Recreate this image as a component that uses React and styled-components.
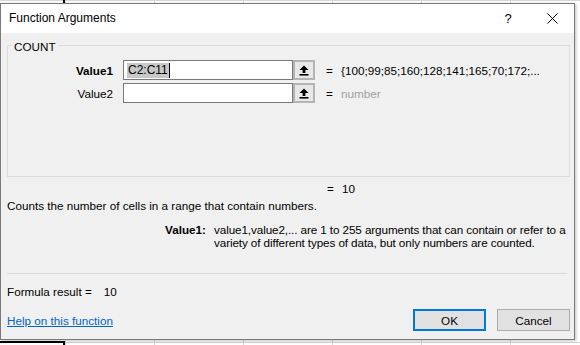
import React from 'react';
import styled, { createGlobalStyle } from 'styled-components';

const Global = createGlobalStyle`
  html, body { margin:0; padding:0; }
  body {
    width:580px;
    height:345px;
    overflow:hidden;
    background:#fff;
    font-family:"Segoe UI","Liberation Sans",Arial,sans-serif;
    font-size:11.7px;
    color:#000;
  }
`

// spreadsheet behind the dialog: grid lines and the selected cell border
const Sheet = styled.div`
  box-sizing:border-box;
  width:580px;
  height:345px;
  padding-top:3px;
  background:
    linear-gradient(#000,#000) 0 341px / 65px 2px no-repeat,
    linear-gradient(#000,#000) 63px 0 / 2px 3px no-repeat,
    linear-gradient(#000,#000) 63px 341px / 2px 4px no-repeat,
    linear-gradient(#d6d6d6,#d6d6d6) 0 342px / 100% 1px no-repeat,
    linear-gradient(#d6d6d6,#d6d6d6) 0 0 / 100% 1px no-repeat,
    linear-gradient(90deg,#d6d6d6 1px,transparent 1px) 65px 0 / 89px 100% repeat-x,
    #fff;
`

const Dialog = styled.div`
  box-sizing:border-box;
  width:575px;
  height:337px;
  border:1px solid #7a7a7a;
  background:#f0f0f0;
  box-shadow:1px 1px 3px rgba(0,0,0,.25);
  display:flex;
  flex-direction:column;
  overflow:hidden;
`

const TitleBar = styled.div`
  height:29px;
  flex:none;
  background:#fff;
  display:flex;
  align-items:center;
  padding-left:8px;
`

const Title = styled.div`
  flex:1;
  font-size:12px;
  padding-bottom:1px;
`

const TitleButton = styled.div`
  width:44px;
  height:29px;
  display:flex;
  align-items:center;
  justify-content:center;
  font-size:13px;
`

const Body = styled.div`
  flex:1;
  min-height:0;
  display:flex;
  flex-direction:column;
  padding:12px 4px 8px 6px;
`

const GroupBox = styled.div`
  box-sizing:border-box;
  flex:none;
  height:132px;
  border:1px solid #dcdcdc;
  padding-top:13px;
  display:flex;
  flex-direction:column;
  gap:3px;
`

const Legend = styled.div`
  width:fit-content;
  margin:-20px 0 2px 4px;
  padding:0 2px;
  line-height:16px;
  background:#f0f0f0;
`

const ArgRow = styled.div`
  display:flex;
  align-items:center;
  height:20px;
`

const ArgLabel = styled.div`
  width:105px;
  margin-right:10px;
  text-align:right;
  font-weight:${p => p.$bold ? 'bold' : 'normal'};
`

const InputBox = styled.div`
  box-sizing:border-box;
  width:170px;
  height:20px;
  border:1px solid #7a7a7a;
  background:#fff;
  display:flex;
  align-items:center;
  padding-left:3px;
  font-size:12px;
`

const Selected = styled.span`
  background:#c8c8c8;
  padding:0 1px;
  line-height:15px;
`

const Caret = styled.span`
  display:inline-block;
  width:1px;
  height:15px;
  background:#000;
`

const RefButton = styled.div`
  box-sizing:border-box;
  width:22px;
  height:20px;
  border:2px solid #b4b4b4;
  background:#e8e8e8;
  display:flex;
  align-items:center;
  justify-content:center;
`

const Eq = styled.span`
  display:inline-block;
  width:15px;
  margin-left:${p => p.$flush ? 0 : 11}px;
`

const ArgValue = styled.div`
  color:${p => p.$muted ? '#a0a0a0' : '#000'};
  white-space:nowrap;
`

const ResultLine = styled.div`
  display:flex;
  line-height:16px;
  margin:4px 0 0 320px;
`

const Text = styled.div`
  line-height:16px;
  white-space:nowrap;
  margin-top:${p => p.$top || 0}px;
`

const DescRow = styled.div`
  display:grid;
  grid-template-columns:199px 1fr;
  column-gap:8px;
  line-height:13px;
  white-space:nowrap;
  margin-top:9px;
`

const DescLabel = styled.div`
  text-align:right;
  font-weight:bold;
`

const DescText = styled.div`
  letter-spacing:-0.1px;
`

const Divider = styled.div`
  flex:none;
  height:1px;
  background:#dadada;
  margin-top:24px;
  margin-right:3px;
`

const ResultText = styled.div`
  display:flex;
  gap:12px;
  line-height:16px;
  margin-top:10px;
`

const Footer = styled.div`
  margin-top:auto;
  display:flex;
  align-items:center;
  gap:11px;
`

const HelpLink = styled.a`
  flex:1;
  color:#0066cc;
  text-decoration:underline;
  margin-top:1px;
`

const Button = styled.div`
  box-sizing:border-box;
  width:73px;
  height:22px;
  display:flex;
  align-items:center;
  justify-content:center;
  background:#e1e1e1;
  border:${p => p.$primary ? '2px solid #0078d7' : '1px solid #adadad'};
`

function RefIcon() {
  return (
    <svg width="10" height="11" viewBox="0 0 10 11">
      <path d="M5 0.5 L9.5 5 L6.4 5 L6.4 8 L3.6 8 L3.6 5 L0.5 5 Z" fill="#000" />
      <rect x="0.5" y="9" width="9" height="1.6" fill="#000" />
    </svg>
  );
}

function CloseIcon() {
  return (
    <svg width="11" height="11" viewBox="0 0 11 11">
      <path d="M0.5 0.5 L10.5 10.5 M10.5 0.5 L0.5 10.5" stroke="#000" strokeWidth="1" />
    </svg>
  );
}

const args = [
  { name: 'Value1', bold: true, text: 'C2:C11', value: '{100;99;85;160;128;141;165;70;172;...' },
  { name: 'Value2', bold: false, text: '', value: 'number', muted: true },
];

export default function App() {
  return (
    <>
      <Global />
      <Sheet>
        <Dialog>
          <TitleBar>
            <Title>Function Arguments</Title>
            <TitleButton>?</TitleButton>
            <TitleButton><CloseIcon /></TitleButton>
          </TitleBar>
          <Body>
            <GroupBox>
              <Legend>COUNT</Legend>
              {args.map(a => (
                <ArgRow key={a.name}>
                  <ArgLabel $bold={a.bold}>{a.name}</ArgLabel>
                  <InputBox>
                    {a.text && <><Selected>{a.text}</Selected><Caret /></>}
                  </InputBox>
                  <RefButton><RefIcon /></RefButton>
                  <Eq>=</Eq>
                  <ArgValue $muted={a.muted}>{a.value}</ArgValue>
                </ArgRow>
              ))}
            </GroupBox>
            <ResultLine><Eq $flush>=</Eq><span>10</span></ResultLine>
            <Text $top={1}>Counts the number of cells in a range that contain numbers.</Text>
            <DescRow>
              <DescLabel>Value1:</DescLabel>
              <DescText>
                value1,value2,... are 1 to 255 arguments that can contain or refer to a<br />
                variety of different types of data, but only numbers are counted.
              </DescText>
            </DescRow>
            <Divider />
            <ResultText><span>Formula result =</span><span>10</span></ResultText>
            <Footer>
              <HelpLink href="#">Help on this function</HelpLink>
              <Button $primary>OK</Button>
              <Button>Cancel</Button>
            </Footer>
          </Body>
        </Dialog>
      </Sheet>
    </>
  );
}
